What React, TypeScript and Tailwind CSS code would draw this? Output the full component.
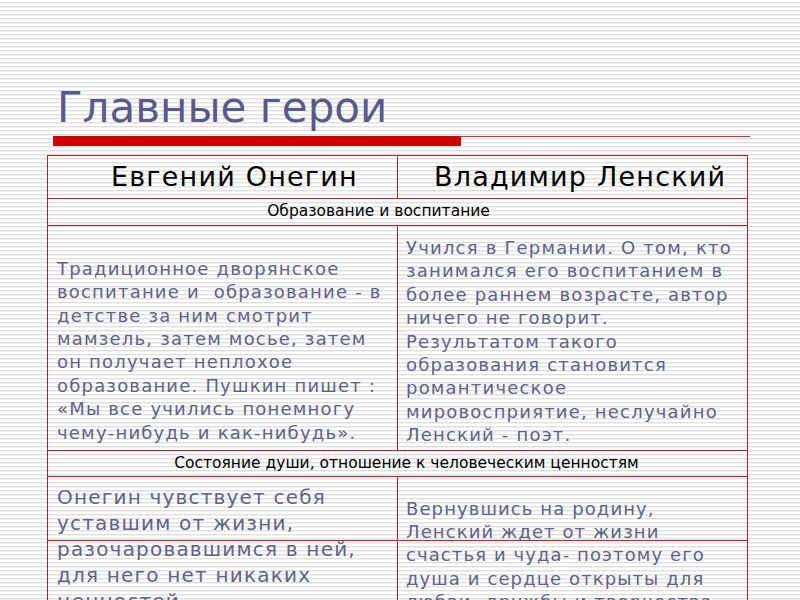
// Slide: "Главные герои" — comparison table of Onegin and Lensky.
// Striped background, title, red rule, and a bordered two-column table.

const font = "font-['DejaVu_Sans',sans-serif]"

function SectionRow({ text, className }: { text: string; className: string }) {
  return (
    <div className={`col-span-2 flex items-center justify-center border-r border-b border-[#a3262c] text-[15.5px] text-black ${className}`}>
      {text}
    </div>
  )
}

function Lines({ lines }: { lines: string[] }) {
  return (
    <>
      {lines.map((l, i) => (
        <div key={i} className="whitespace-pre">{l}</div>
      ))}
    </>
  )
}

export default function App() {
  return (
    <div
      className={`w-[800px] h-[600px] overflow-hidden bg-[repeating-linear-gradient(to_bottom,#ffffff_0px,#ffffff_2px,#dedede_2px,#dedede_3px,#f2f2f2_3px,#f2f2f2_4px)] ${font}`}
    >
      {/* title */}
      <h1 className="pt-[87px] pl-[57px] text-[42px] leading-[42px] text-[#5a5a8a]">Главные герои</h1>

      {/* red rule */}
      <div className="mt-[7px] ml-[53px] flex w-[697px]">
        <div className="h-[10px] w-[408px] bg-[#cc0000]" />
        <div className="h-[10px] flex-1 border-t border-[#cc3333]" />
      </div>

      {/* table */}
      <div className="mt-[9px] ml-[47px] grid w-[701px] grid-cols-[350px_350px] border-t border-l border-[#a3262c]">
        {/* header */}
        <div className="flex h-[43px] items-center border-r border-b border-[#a3262c] pl-[63px] text-[27px] tracking-[1.2px] text-black">
          Евгений Онегин
        </div>
        <div className="flex h-[43px] items-center border-r border-b border-[#a3262c] pl-[36px] text-[27px] tracking-[1.2px] text-black">
          Владимир Ленский
        </div>

        <SectionRow text="Образование и воспитание" className="h-[27px] pr-[38px]" />

        <div className="flex h-[225px] flex-col justify-end border-r border-b border-[#a3262c] pb-[6px] pl-[9px] text-[18px] leading-[23.4px] tracking-[1.2px] text-[#626285]">
          <Lines
            lines={[
              "Традиционное дворянское",
              "воспитание и  образование - в",
              "детстве за ним смотрит",
              "мамзель, затем мосье, затем",
              "он получает неплохое",
              "образование. Пушкин пишет :",
              "«Мы все учились понемногу",
              "чему-нибудь и как-нибудь».",
            ]}
          />
        </div>
        <div className="h-[225px] border-r border-b border-[#a3262c] pt-[10px] pl-[8px] text-[18px] leading-[23.4px] tracking-[1.2px] text-[#626285]">
          <Lines
            lines={[
              "Учился в Германии. О том, кто",
              "занимался его воспитанием в",
              "более раннем возрасте, автор",
              "ничего не говорит.",
              "Результатом такого",
              "образования становится",
              "романтическое",
              "мировосприятие, неслучайно",
              "Ленский - поэт.",
            ]}
          />
        </div>

        <SectionRow text="Состояние души, отношение к человеческим ценностям" className="h-[26px] pl-[18px]" />

        {/* last block, split by a row line that runs through the text */}
        <div className="h-[64px] border-r border-b border-[#a3262c] pt-[7px] pl-[9px] text-[20px] leading-[26px] tracking-[1.2px] text-[#626285]">
          <Lines lines={["Онегин чувствует себя", "уставшим от жизни,"]} />
        </div>
        <div className="h-[64px] border-r border-b border-[#a3262c] pt-[20px] pl-[8px] text-[18px] leading-[23px] tracking-[1.1px] text-[#626285]">
          <Lines lines={["Вернувшись на родину,", "Ленский ждет от жизни"]} />
        </div>
        <div className="h-[80px] border-r border-[#a3262c] pl-[9px] text-[20px] leading-[26px] tracking-[1.2px] text-[#626285]">
          <div className="-mt-[5px]">
            <Lines lines={["разочаровавшимся в ней,", "для него нет никаких", "ценностей."]} />
          </div>
        </div>
        <div className="h-[80px] border-r border-[#a3262c] pt-[2px] pl-[8px] text-[18px] leading-[23.5px] tracking-[1.1px] text-[#626285]">
          <Lines lines={["счастья и чуда- поэтому его", "душа и сердце открыты для", "любви, дружбы и творчества."]} />
        </div>
      </div>
    </div>
  )
}
